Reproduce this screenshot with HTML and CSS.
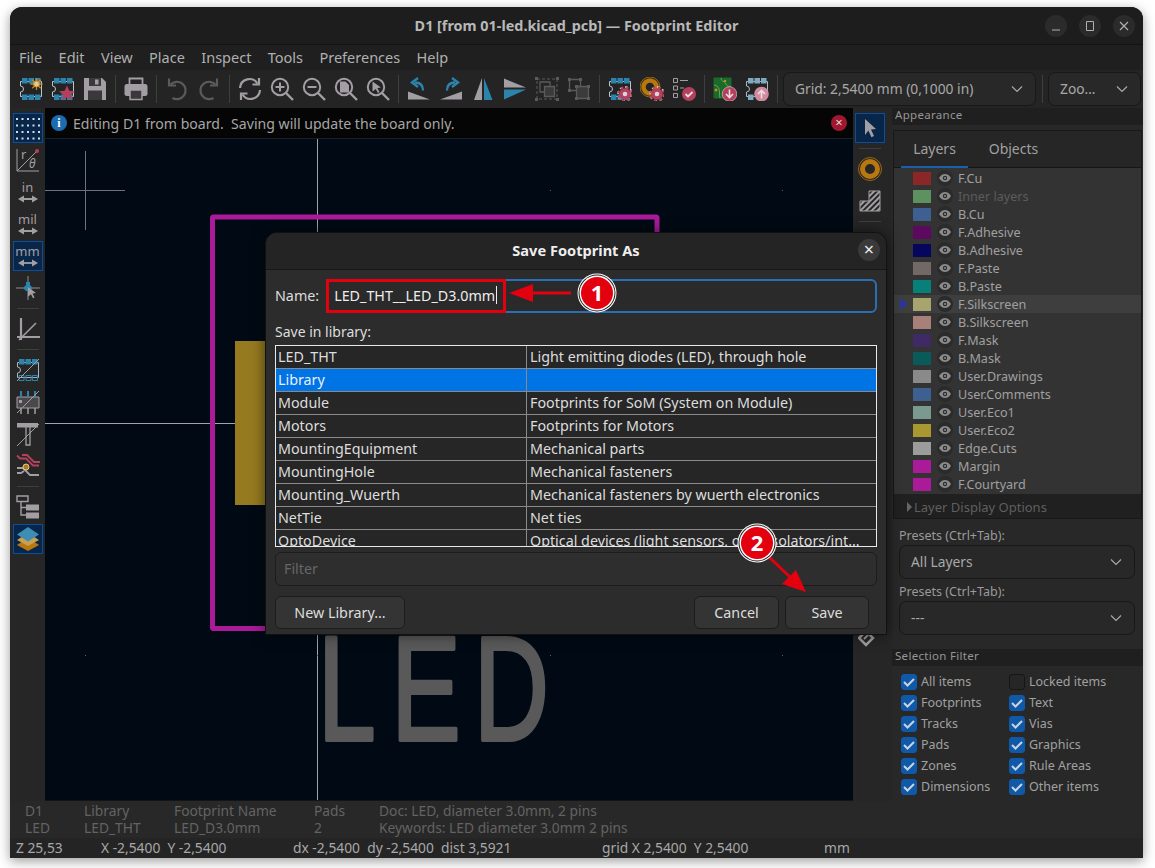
FILE: index.html
```html
<!DOCTYPE html>
<html>
<head>
  <title>Footprint Editor</title>
  <link rel="stylesheet" href="styles.css">
</head>
<body>
  <!-- icon sheet -->
  <svg class="sheet" xmlns="http://www.w3.org/2000/svg">
    <defs>
      <symbol id="fp" viewBox="0 0 24 24">
        <path d="M1.500 4.500h21v15h-21v-4.500a3 3 0 0 0 0-6z" fill="none" stroke="#b9c6cc"/>
        <path d="M3 1h5.500v5.500H3zM9.500 1H15v5.500H9.500zM16 1h5.500v5.500H16zM3 17.500h5.500V23H3zM9.500 17.500H15V23H9.500zM16 17.500h5.500V23H16z" fill="#2c83ab"/>
      </symbol>
      <symbol id="gear" viewBox="0 0 24 24">
        <circle cx="17" cy="17" r="7" fill="none" stroke="#d8d0d4" stroke-width="1.800" stroke-dasharray="2.600 2.900"/>
        <circle cx="17" cy="17" r="5.800" fill="#b5405e"/>
        <circle cx="17" cy="17" r="6.800" fill="none" stroke="#b5405e" stroke-width="1.800" stroke-dasharray="2.600 2.900"/>
        <circle cx="17" cy="17" r="2.300" fill="#dcd4d8"/>
      </symbol>
      <symbol id="fp-new" viewBox="0 0 24 24">
        <use href="#fp"/>
        <path d="M17.500 1v12M11.500 7h12M13.300 2.800l8.400 8.400M21.700 2.800l-8.400 8.400" stroke="#c98a1e" stroke-width="1.300"/>
        <circle cx="17.500" cy="7" r="3" fill="#e2c89a" stroke="#c98a1e"/>
      </symbol>
      <symbol id="fp-star" viewBox="0 0 24 24">
        <use href="#fp"/>
        <path d="M16 8.500l2.300 5.200 5.700.5-4.300 3.700 1.300 5.600-5-3-5 3 1.300-5.600L8 14.200l5.700-.5z" fill="#b5405e"/>
      </symbol>
      <symbol id="save" viewBox="0 0 24 24">
        <path d="M1 1h18l4 4v18H1z" fill="#a39ea3"/>
        <path d="M6 1h12v8H6z" fill="#3a383a"/>
        <path d="M12 2.500h3.500v5H12z" fill="#a39ea3"/>
        <path d="M5 13.500h14V23H5z" fill="#3a383a"/>
      </symbol>
      <symbol id="print" viewBox="0 0 24 24">
        <path d="M5.500 7V1.500h13V7" fill="none" stroke="#a39ea3" stroke-width="1.800"/>
        <rect x="0.500" y="7" width="23" height="12" rx="2.500" fill="#a39ea3"/>
        <path d="M6 13h12v9.500H6z" fill="#3a383a" stroke="#a39ea3" stroke-width="1.500"/>
      </symbol>
      <symbol id="undo" viewBox="0 0 24 24">
        <path d="M5.500 7.500a8.700 8.700 0 1 1 2 13.500" fill="none" stroke="#5c5a5c" stroke-width="2.200"/>
        <path d="M4 1.500v7h7" fill="none" stroke="#5c5a5c" stroke-width="2.200"/>
      </symbol>
      <symbol id="redo" viewBox="0 0 24 24">
        <path d="M18.500 7.500a8.700 8.700 0 1 0-2 13.500" fill="none" stroke="#5c5a5c" stroke-width="2.200"/>
        <path d="M20 1.500v7h-7" fill="none" stroke="#5c5a5c" stroke-width="2.200"/>
      </symbol>
      <symbol id="refresh" viewBox="0 0 24 24">
        <g fill="none" stroke="#a39ea3" stroke-width="2.200">
          <path d="M2 11a9.500 9.500 0 0 1 17.500-4.500"/>
          <path d="M21 1v6.500h-6.500"/>
          <path d="M22 13a9.500 9.500 0 0 1-17.500 4.500"/>
          <path d="M3 23v-6.500h6.500"/>
        </g>
      </symbol>
      <symbol id="mag" viewBox="0 0 24 24">
        <circle cx="10" cy="10" r="8.200" fill="none" stroke="#a39ea3" stroke-width="2"/>
        <path d="M16 16l7 7" stroke="#a39ea3" stroke-width="2.400"/>
      </symbol>
      <symbol id="zoom-in" viewBox="0 0 24 24">
        <use href="#mag"/><path d="M5.500 10h9M10 5.500v9" stroke="#a39ea3" stroke-width="2"/>
      </symbol>
      <symbol id="zoom-out" viewBox="0 0 24 24">
        <use href="#mag"/><path d="M5.500 10h9" stroke="#a39ea3" stroke-width="2"/>
      </symbol>
      <symbol id="zoom-fit" viewBox="0 0 24 24">
        <use href="#mag"/><path d="M6 4.500h5.500L15 8v7.500H6z" fill="#a39ea3"/>
      </symbol>
      <symbol id="zoom-sel" viewBox="0 0 24 24">
        <use href="#mag"/><path d="M6.500 4.500l8.500 6-3.700.6 2.200 4-1.600.8-2.100-4-3.300 2.600z" fill="#a39ea3"/>
      </symbol>
      <symbol id="rot-ccw" viewBox="0 0 24 24">
        <path d="M1 14.500L23 22.500H1z" fill="#a39ea3"/>
        <path d="M16 13.500c0-5-3-8-8-8" fill="none" stroke="#2c83ab" stroke-width="2.400"/>
        <path d="M11 1L5 5.500l6 4.500" fill="none" stroke="#2c83ab" stroke-width="2.400"/>
      </symbol>
      <symbol id="rot-cw" viewBox="0 0 24 24">
        <path d="M23 14.500L1 22.500H23z" fill="#a39ea3"/>
        <path d="M8 13.500c0-5 3-8 8-8" fill="none" stroke="#2c83ab" stroke-width="2.400"/>
        <path d="M13 1l6 4.500L13 10" fill="none" stroke="#2c83ab" stroke-width="2.400"/>
      </symbol>
      <symbol id="mirror-h" viewBox="0 0 24 24">
        <path d="M11 1L3 23h8z" fill="#a39ea3"/><path d="M13 1l8.500 22H13z" fill="#2c83ab"/>
      </symbol>
      <symbol id="mirror-v" viewBox="0 0 24 24">
        <path d="M1 1.500L23 10.500H1z" fill="#a39ea3"/><path d="M1 12.500H23L1 22.500z" fill="#2c83ab"/>
      </symbol>
      <symbol id="group" viewBox="0 0 24 24">
        <path d="M2 2h20v20H2z" fill="none" stroke="#5c5a5c" stroke-dasharray="3 2"/>
        <path d="M0 0h3v3H0zM21 0h3v3h-3zM0 21h3v3H0zM21 21h3v3h-3z" fill="#5c5a5c"/>
        <path d="M5 5h10v10H5z" fill="none" stroke="#5c5a5c" stroke-width="1.300"/>
        <path d="M9.500 9.500h10v10h-10z" fill="#3c3b3c" stroke="#5c5a5c" stroke-width="1.300"/>
      </symbol>
      <symbol id="ungroup" viewBox="0 0 24 24">
        <path d="M2.500 2.500h11v11h-11z" fill="none" stroke="#5c5a5c" stroke-width="1.300"/>
        <path d="M9.500 9.500h12v12h-12z" fill="#3c3b3c" stroke="#5c5a5c" stroke-width="1.300"/>
        <path d="M1 1h3v3H1zM12 1h3v3h-3zM1 12h3v3H1zM8 8h3v3H8zM20 8h3v3h-3zM8 20h3v3H8zM20 20h3v3h-3z" fill="#5c5a5c"/>
      </symbol>
      <symbol id="fp-gear" viewBox="0 0 24 24">
        <use href="#fp"/><use href="#gear"/>
      </symbol>
      <symbol id="pad-gear" viewBox="0 0 24 24">
        <circle cx="10" cy="10" r="6.500" fill="none" stroke="#b9780f" stroke-width="4.500"/>
        <circle cx="10" cy="10" r="10" fill="none" stroke="#b9780f" stroke-width=".8"/>
        <use href="#gear"/>
      </symbol>
      <symbol id="checks" viewBox="0 0 24 24">
        <path d="M1.500 1.500h4v4h-4zM1.500 9h4v4h-4zM1.500 16.500h4v4h-4z" fill="none" stroke="#a39ea3"/>
        <path d="M8 3.500h8M8 11h4" stroke="#a39ea3" stroke-width="1.200"/>
        <circle cx="17" cy="17" r="7" fill="#b5405e"/>
        <path d="M13.500 17l2.500 2.500 4.500-4.500" fill="none" stroke="#e8dfe2" stroke-width="1.800"/>
      </symbol>
      <symbol id="from-board" viewBox="0 0 24 24">
        <rect x="0.500" y="0.500" width="18" height="21" rx="1" fill="#1c6a28"/>
        <path d="M8 1c0 4 4 3 5 6s4 2 5 3M1 8c3 0 4 2 5 4s0 6 1 9" fill="none" stroke="#62a868"/>
        <circle cx="3" cy="13" r="1.500" fill="#c98a1e"/>
        <circle cx="12" cy="4" r="1.200" fill="#c98a1e"/>
        <circle cx="16.500" cy="17" r="7.300" fill="#b5405e" stroke="#d8d0d4" stroke-width=".6"/>
        <path d="M16.500 12.500v8M13 17l3.500 3.500L20 17" fill="none" stroke="#e8dfe2" stroke-width="1.600"/>
      </symbol>
      <symbol id="to-board" viewBox="0 0 24 24">
        <path d="M1.500 4.500h21v15h-21v-4.500a3 3 0 0 0 0-6z" fill="none" stroke="#a9b8c0"/>
        <path d="M3 1h5.500v5.500H3zM9.500 1H15v5.500H9.500zM16 1h5.500v5.500H16zM3 17.500h5.500V23H3z" fill="#7fa9bf"/>
        <circle cx="16.500" cy="17" r="7.300" fill="#d28a9e"/>
        <path d="M16.500 21.500v-8M13 17l3.500-3.500L20 17" fill="none" stroke="#e8dfe2" stroke-width="1.600"/>
      </symbol>
      <symbol id="polar" viewBox="0 0 24 24">
        <path d="M1 1v22h22" fill="none" stroke="#a39ea3"/>
        <path d="M1 23L21 3" stroke="#a39ea3"/>
        <circle cx="21" cy="3" r="2" fill="#b5405e"/>
        <text x="5" y="11" class="ico-text" font-size="13">r</text>
        <text x="13" y="20" class="ico-text" font-size="12" font-style="italic">&#952;</text>
      </symbol>
      <symbol id="unit-arrow" viewBox="0 0 24 24">
        <path d="M5 19h14" stroke="#a39ea3" stroke-width="1.800"/>
        <path d="M2 19l6-3.500v7zM22 19l-6-3.500v7z" fill="#a39ea3"/>
      </symbol>
      <symbol id="snap" viewBox="0 0 24 24">
        <path d="M12 0v24M0 12h24" stroke="#8f8a8f"/>
        <path d="M10 6h4v3l3 3-3 3h-4l-3-3 3-3z" fill="#2c83ab"/>
        <path d="M12 11l8 6-3.500.5 2 4-1.500.8-2-4-3 2.500z" fill="#a39ea3"/>
      </symbol>
      <symbol id="axes" viewBox="0 0 24 24">
        <path d="M5 1v22M1 20h23" stroke="#a39ea3" stroke-width="2.200"/>
        <path d="M3 23L20 6" stroke="#a39ea3" stroke-width="1.600"/>
      </symbol>
      <symbol id="fp-slash" viewBox="0 0 24 24">
        <path d="M1.500 4.500h21v15h-21v-4.500a3 3 0 0 0 0-6z" fill="none" stroke="#a9b8c0"/>
        <path d="M3 1h5.500v5.500H3zM9.500 1H15v5.500H9.500zM16 1h5.500v5.500H16z" fill="#2c83ab"/>
        <path d="M3 17.500h5v5H3zM10 17.500h5v5h-5zM16.500 17.500h5v5h-5z" fill="none" stroke="#2c83ab"/>
        <path d="M1 23L23 1" stroke="#a39ea3"/>
      </symbol>
      <symbol id="ic-slash" viewBox="0 0 24 24">
        <path d="M1 7h22v11H1z" fill="#4a484a" stroke="#a39ea3"/>
        <path d="M5 1v6M12 1v6M19 1v6" stroke="#2c83ab" stroke-width="2"/>
        <path d="M5 18v6M12 18v6M19 18v6" stroke="#a39ea3" stroke-width="1.500"/>
        <path d="M3 10h3v3H3z" fill="#a39ea3"/>
        <path d="M1 23L23 1" stroke="#a39ea3"/>
      </symbol>
      <symbol id="text-slash" viewBox="0 0 24 24">
        <path d="M10 5v18h4V5" fill="none" stroke="#a39ea3" stroke-width="1.300"/>
        <path d="M1 1h21v4.500H1z" fill="#a39ea3"/>
        <path d="M1 24L23 2" stroke="#a39ea3"/>
      </symbol>
      <symbol id="tracks" viewBox="0 0 24 24">
        <path d="M6 1h5l7 7h6M1 1.500l3 3h6l7 7h6" fill="none" stroke="#b5405e" stroke-width="1.800"/>
        <path d="M1 14h6l7 7h9M1 19h4l3-2" fill="none" stroke="#a39ea3" stroke-width="1.800"/>
        <circle cx="10" cy="13" r="3" fill="#b9780f" stroke="#d8c8a0"/>
      </symbol>
      <symbol id="tree" viewBox="0 0 24 24">
        <path d="M1 1h11v5.500H1z" fill="none" stroke="#a39ea3" stroke-width="1.400"/>
        <path d="M5 6.500V20h5M5 12.500h5" fill="none" stroke="#a39ea3" stroke-width="1.400"/>
        <path d="M10 9.500h13v6H10zM10 17.500h13v6H10z" fill="#a39ea3"/>
      </symbol>
      <symbol id="layers" viewBox="0 0 24 24">
        <path d="M12 11l11 7-11 6-11-6z" fill="#b9780f"/>
        <path d="M12 6l11 7-11 6-11-6z" fill="#c9a050"/>
        <path d="M12 0l11 7.500-11 7-11-7z" fill="#3d8db5"/>
      </symbol>
      <symbol id="arrow" viewBox="0 0 24 24">
        <path d="M7 3l11 10-5 .5 3 6.500-2.600 1.200-3-6.700L7 19z" fill="#a39ea3"/>
      </symbol>
      <symbol id="ring" viewBox="0 0 24 24">
        <circle cx="12" cy="12" r="7.500" fill="none" stroke="#b9780f" stroke-width="5"/>
        <circle cx="12" cy="12" r="11.500" fill="none" stroke="#b9780f" stroke-width=".8"/>
      </symbol>
      <pattern id="stripes" width="4" height="4" patternUnits="userSpaceOnUse" patternTransform="rotate(45)">
        <rect width="2" height="4" fill="#a39ea3"/>
      </pattern>
      <symbol id="hatch" viewBox="0 0 24 24">
        <path d="M2 22V12h9V2h11v20z" fill="url(#stripes)" stroke="#a39ea3"/>
      </symbol>
      <symbol id="tag" viewBox="0 0 24 24">
        <path d="M1 10l7-7 7 7-7 7z" fill="none" stroke="#a39ea3" stroke-width="2.500"/>
        <path d="M6 11l4-4" stroke="#a39ea3" stroke-width="2"/>
      </symbol>
      <symbol id="eye" viewBox="0 0 12 8">
        <path d="M0 4c2-3.200 4-4 6-4s4 .8 6 4c-2 3.200-4 4-6 4S2 7.200 0 4z" fill="#8b8b8b"/>
        <circle cx="6" cy="4" r="2.200" fill="#2b2b2b"/>
        <circle cx="6" cy="4" r="1.100" fill="#8b8b8b"/>
      </symbol>
      <symbol id="chev" viewBox="0 0 12 8">
        <path d="M1 1.500l5 5 5-5" fill="none" stroke="#a8a8a8" stroke-width="1.200"/>
      </symbol>
      <symbol id="dots" viewBox="0 0 24 24">
        <g fill="#d6dce2">
          <rect x="0" y="2" width="2" height="2"/><rect x="5.500" y="2" width="2" height="2"/><rect x="11" y="2" width="2" height="2"/><rect x="16.500" y="2" width="2" height="2"/><rect x="22" y="2" width="2" height="2"/>
          <rect x="0" y="8.500" width="2" height="2"/><rect x="5.500" y="8.500" width="2" height="2"/><rect x="11" y="8.500" width="2" height="2"/><rect x="16.500" y="8.500" width="2" height="2"/><rect x="22" y="8.500" width="2" height="2"/>
          <rect x="0" y="15" width="2" height="2"/><rect x="5.500" y="15" width="2" height="2"/><rect x="11" y="15" width="2" height="2"/><rect x="16.500" y="15" width="2" height="2"/><rect x="22" y="15" width="2" height="2"/>
          <rect x="0" y="21.500" width="2" height="2"/><rect x="5.500" y="21.500" width="2" height="2"/><rect x="11" y="21.500" width="2" height="2"/><rect x="16.500" y="21.500" width="2" height="2"/><rect x="22" y="21.500" width="2" height="2"/>
        </g>
      </symbol>
    </defs>
  </svg>

  <div class="window">
    <header class="titlebar">
      <span class="title">D1 [from 01-led.kicad_pcb] — Footprint Editor</span>
      <div class="win-btns">
        <span class="win-btn"><svg width="10" height="10"><path d="M1 9h8" stroke="#b0b0b0" stroke-width="1.200"/></svg></span>
        <span class="win-btn"><svg width="10" height="10"><path d="M1.500 .5h7v9h-7z" fill="none" stroke="#b0b0b0"/></svg></span>
        <span class="win-btn"><svg width="10" height="10"><path d="M1 1l8 8M9 1l-8 8" stroke="#b0b0b0" stroke-width="1.200"/></svg></span>
      </div>
    </header>

    <nav class="menubar">
      <span>File</span><span>Edit</span><span>View</span><span>Place</span><span>Inspect</span><span>Tools</span><span>Preferences</span><span>Help</span>
    </nav>

    <div class="toolbar">
      <span class="tool"><svg class="ico"><use href="#fp-new"/></svg></span>
      <span class="tool"><svg class="ico"><use href="#fp-star"/></svg></span>
      <span class="tool"><svg class="ico"><use href="#save"/></svg></span>
      <i class="vsep"></i>
      <span class="tool"><svg class="ico"><use href="#print"/></svg></span>
      <i class="vsep"></i>
      <span class="tool"><svg class="ico"><use href="#undo"/></svg></span>
      <span class="tool"><svg class="ico"><use href="#redo"/></svg></span>
      <i class="vsep"></i>
      <span class="tool"><svg class="ico"><use href="#refresh"/></svg></span>
      <span class="tool"><svg class="ico"><use href="#zoom-in"/></svg></span>
      <span class="tool"><svg class="ico"><use href="#zoom-out"/></svg></span>
      <span class="tool"><svg class="ico"><use href="#zoom-fit"/></svg></span>
      <span class="tool"><svg class="ico"><use href="#zoom-sel"/></svg></span>
      <i class="vsep"></i>
      <span class="tool"><svg class="ico"><use href="#rot-ccw"/></svg></span>
      <span class="tool"><svg class="ico"><use href="#rot-cw"/></svg></span>
      <span class="tool"><svg class="ico"><use href="#mirror-h"/></svg></span>
      <span class="tool"><svg class="ico"><use href="#mirror-v"/></svg></span>
      <span class="tool"><svg class="ico"><use href="#group"/></svg></span>
      <span class="tool"><svg class="ico"><use href="#ungroup"/></svg></span>
      <i class="vsep"></i>
      <span class="tool"><svg class="ico"><use href="#fp-gear"/></svg></span>
      <span class="tool"><svg class="ico"><use href="#pad-gear"/></svg></span>
      <span class="tool"><svg class="ico"><use href="#checks"/></svg></span>
      <i class="vsep"></i>
      <span class="tool"><svg class="ico"><use href="#from-board"/></svg></span>
      <span class="tool"><svg class="ico"><use href="#to-board"/></svg></span>
      <i class="vsep"></i>
      <div class="combo combo-grid"><span>Grid: 2,5400 mm (0,1000 in)</span><svg class="chev"><use href="#chev"/></svg></div>
      <i class="vsep vsep-combo"></i>
      <div class="combo combo-zoom"><span>Zoo…</span><svg class="chev"><use href="#chev"/></svg></div>
    </div>

    <div class="main">
      <div class="center">
        <div class="work">
          <aside class="sidetools">
            <span class="tool on"><svg class="ico"><use href="#dots"/></svg></span>
            <span class="tool"><svg class="ico"><use href="#polar"/></svg></span>
            <span class="tool unit"><b>in</b><svg class="ico"><use href="#unit-arrow"/></svg></span>
            <span class="tool unit"><b>mil</b><svg class="ico"><use href="#unit-arrow"/></svg></span>
            <span class="tool unit on"><b>mm</b><svg class="ico"><use href="#unit-arrow"/></svg></span>
            <span class="tool"><svg class="ico"><use href="#snap"/></svg></span>
            <i class="hsep"></i>
            <span class="tool"><svg class="ico"><use href="#axes"/></svg></span>
            <i class="hsep"></i>
            <span class="tool"><svg class="ico"><use href="#fp-slash"/></svg></span>
            <span class="tool"><svg class="ico"><use href="#ic-slash"/></svg></span>
            <span class="tool"><svg class="ico"><use href="#text-slash"/></svg></span>
            <span class="tool"><svg class="ico"><use href="#tracks"/></svg></span>
            <i class="hsep"></i>
            <span class="tool"><svg class="ico"><use href="#tree"/></svg></span>
            <span class="tool on"><svg class="ico"><use href="#layers"/></svg></span>
          </aside>

          <div class="canvas">
            <div class="infobar">
              <span class="info-dot">i</span>
              <span class="info-text">Editing D1 from board.&nbsp; Saving will update the board only.</span>
              <span class="info-close">×</span>
            </div>
            <svg class="view" viewBox="0 0 808 661">
              <path d="M40.500 12v79M0 51.500h80" stroke="#6f7378"/>
              <path d="M0 284.500h190M272.500 0v662" stroke="#a0a4a8"/>
              <rect x="167.500" y="78" width="444.500" height="411.500" rx="1" fill="none" stroke="#aa1a99" stroke-width="5"/>
              <rect x="190" y="202" width="200" height="164" fill="#957a20"/>
              <path d="M40 516.500h1M272 516.500h1M505 516.500h1M737 516.500h1M505 51.500h1M737 51.500h1M737 284.500h1" stroke="#596068"/>
              <text class="led" transform="translate(0 600.500) scale(.7 1)" x="390 495 613">LED</text>
            </svg>
          </div>

          <aside class="sidetools sidetools-right">
            <span class="tool on"><svg class="ico"><use href="#arrow"/></svg></span>
            <i class="hsep"></i>
            <span class="tool"><svg class="ico"><use href="#ring"/></svg></span>
            <span class="tool"><svg class="ico"><use href="#hatch"/></svg></span>
            <i class="hsep"></i>
            <span class="tool tool-low"><svg class="ico"><use href="#tag"/></svg></span>
          </aside>
        </div>

        <div class="msgpanel">
          <div><p>D1</p><p>LED</p></div>
          <div><p>Library</p><p>LED_THT</p></div>
          <div><p>Footprint Name</p><p>LED_D3.0mm</p></div>
          <div><p>Pads</p><p>2</p></div>
          <div><p>Doc: LED, diameter 3.0mm, 2 pins</p><p>Keywords: LED diameter 3.0mm 2 pins</p></div>
        </div>
      </div>

      <aside class="panel">
        <h4 class="panel-head">Appearance</h4>
        <div class="layerbox">
          <div class="tabs">
            <span class="tab tab-on">Layers</span>
            <span class="tab">Objects</span>
          </div>
          <ul class="layers">
            <li><i class="swatch c-fcu"></i><span class="eye"><svg><use href="#eye"/></svg></span>F.Cu</li>
            <li class="off"><i class="swatch c-inner"></i><span class="eye"><svg><use href="#eye"/></svg></span>Inner layers</li>
            <li><i class="swatch c-bcu"></i><span class="eye"><svg><use href="#eye"/></svg></span>B.Cu</li>
            <li><i class="swatch c-fadh"></i><span class="eye"><svg><use href="#eye"/></svg></span>F.Adhesive</li>
            <li><i class="swatch c-badh"></i><span class="eye"><svg><use href="#eye"/></svg></span>B.Adhesive</li>
            <li><i class="swatch c-fpaste"></i><span class="eye"><svg><use href="#eye"/></svg></span>F.Paste</li>
            <li><i class="swatch c-bpaste"></i><span class="eye"><svg><use href="#eye"/></svg></span>B.Paste</li>
            <li class="current"><i class="swatch c-fsilk"></i><span class="eye"><svg><use href="#eye"/></svg></span>F.Silkscreen</li>
            <li><i class="swatch c-bsilk"></i><span class="eye"><svg><use href="#eye"/></svg></span>B.Silkscreen</li>
            <li><i class="swatch c-fmask"></i><span class="eye"><svg><use href="#eye"/></svg></span>F.Mask</li>
            <li><i class="swatch c-bmask"></i><span class="eye"><svg><use href="#eye"/></svg></span>B.Mask</li>
            <li><i class="swatch c-draw"></i><span class="eye"><svg><use href="#eye"/></svg></span>User.Drawings</li>
            <li><i class="swatch c-comm"></i><span class="eye"><svg><use href="#eye"/></svg></span>User.Comments</li>
            <li><i class="swatch c-eco1"></i><span class="eye"><svg><use href="#eye"/></svg></span>User.Eco1</li>
            <li><i class="swatch c-eco2"></i><span class="eye"><svg><use href="#eye"/></svg></span>User.Eco2</li>
            <li><i class="swatch c-edge"></i><span class="eye"><svg><use href="#eye"/></svg></span>Edge.Cuts</li>
            <li><i class="swatch c-margin"></i><span class="eye"><svg><use href="#eye"/></svg></span>Margin</li>
            <li><i class="swatch c-margin"></i><span class="eye"><svg><use href="#eye"/></svg></span>F.Courtyard</li>
          </ul>
          <div class="display-opts"><i class="tri"></i>Layer Display Options</div>
        </div>

        <div class="presets">
          <label>Presets (Ctrl+Tab):</label>
          <div class="combo"><span>All Layers</span><svg class="chev"><use href="#chev"/></svg></div>
          <label>Presets (Ctrl+Tab):</label>
          <div class="combo"><span>---</span><svg class="chev"><use href="#chev"/></svg></div>
        </div>

        <h4 class="panel-head">Selection Filter</h4>
        <div class="filters">
          <label class="check"><i class="box on"></i>All items</label>
          <label class="check"><i class="box"></i>Locked items</label>
          <label class="check"><i class="box on"></i>Footprints</label>
          <label class="check"><i class="box on"></i>Text</label>
          <label class="check"><i class="box on"></i>Tracks</label>
          <label class="check"><i class="box on"></i>Vias</label>
          <label class="check"><i class="box on"></i>Pads</label>
          <label class="check"><i class="box on"></i>Graphics</label>
          <label class="check"><i class="box on"></i>Zones</label>
          <label class="check"><i class="box on"></i>Rule Areas</label>
          <label class="check"><i class="box on"></i>Dimensions</label>
          <label class="check"><i class="box on"></i>Other items</label>
        </div>
      </aside>
    </div>

    <footer class="statusbar">
      <span>Z 25,53</span>
      <span>X -2,5400&nbsp; Y -2,5400</span>
      <span>dx -2,5400&nbsp; dy -2,5400&nbsp; dist 3,5921</span>
      <span>grid X 2,5400&nbsp; Y 2,5400</span>
      <span>mm</span>
    </footer>
  </div>

  <!-- modal -->
  <div class="dialog">
    <div class="dlg-title">
      <span>Save Footprint As</span>
      <span class="dlg-close">×</span>
    </div>
    <div class="dlg-body">
      <div class="name-row">
        <span>Name:</span>
        <div class="name-input">LED_THT__LED_D3.0mm<i class="caret"></i></div>
      </div>
      <div class="lib-label">Save in library:</div>
      <div class="libtable">
        <div class="librow"><span>LED_THT</span><span>Light emitting diodes (LED), through hole</span></div>
        <div class="librow sel"><span>Library</span><span></span></div>
        <div class="librow"><span>Module</span><span>Footprints for SoM (System on Module)</span></div>
        <div class="librow"><span>Motors</span><span>Footprints for Motors</span></div>
        <div class="librow"><span>MountingEquipment</span><span>Mechanical parts</span></div>
        <div class="librow"><span>MountingHole</span><span>Mechanical fasteners</span></div>
        <div class="librow"><span>Mounting_Wuerth</span><span>Mechanical fasteners by wuerth electronics</span></div>
        <div class="librow"><span>NetTie</span><span>Net ties</span></div>
        <div class="librow"><span>OptoDevice</span><span>Optical devices (light sensors, opto-isolators/int...</span></div>
      </div>
      <div class="filter-input">Filter</div>
      <div class="dlg-btns">
        <button>New Library...</button>
        <button class="push-right btn-cancel">Cancel</button>
        <button class="btn-save">Save</button>
      </div>
    </div>
  </div>

  <!-- screenshot annotations -->
  <div class="redbox"></div>
  <svg class="marks" viewBox="0 0 1155 868">
    <path d="M571 293H530" stroke="#e3000f" stroke-width="3"/>
    <path d="M509 293l24-9v18z" fill="#e3000f"/>
    <path d="M769 557l22 21" stroke="#e3000f" stroke-width="3"/>
    <path d="M806 592l-24-8 14-14z" fill="#e3000f"/>
    <g class="badge" transform="translate(597 293)">
      <circle r="19.500" fill="#fff"/><circle r="18.500" fill="#222"/><circle r="17.500" fill="#fff"/><circle r="16" fill="#e3000f"/>
      <text y="8" text-anchor="middle">1</text>
    </g>
    <g class="badge" transform="translate(757 543)">
      <circle r="19.500" fill="#fff"/><circle r="18.500" fill="#222"/><circle r="17.500" fill="#fff"/><circle r="16" fill="#e3000f"/>
      <text y="8" text-anchor="middle">2</text>
    </g>
  </svg>
</body>
</html>
```
FILE: styles.css
```css
* {
  box-sizing: border-box;
}

html, body {
  margin: 0;
  height: 100%;
}

body {
  background-color: #fff;
  padding: 7px 12px 0 10px;
  font-family: "Noto Sans", sans-serif;
  font-size: 13.8px;
  color: #a8a8a8;
  overflow: hidden;
}

.sheet {
  position: absolute;
  width: 0;
  height: 0;
}

.window {
  height: 851px;
  display: flex;
  flex-direction: column;
  background-color: #282828;
  border-radius: 12px 12px 0 0;
  overflow: hidden;
  box-shadow: 0 3px 12px rgba(0, 0, 0, 0.4);
}

/* title + menu */
.titlebar {
  height: 38px;
  flex: none;
  display: flex;
  align-items: center;
  justify-content: center;
  position: relative;
  background-color: #1d1d1d;
  border-bottom: 1px solid #141414;
}

.title {
  font-weight: 700;
  font-size: 14.4px;
  color: #b8b8b8;
}

.win-btns {
  position: absolute;
  right: 8px;
  top: 8px;
  display: flex;
  gap: 12px;
}

.win-btn {
  width: 22px;
  height: 22px;
  border-radius: 50%;
  background-color: #2b2b2b;
  display: flex;
  align-items: center;
  justify-content: center;
}

.menubar {
  height: 25px;
  flex: none;
  display: flex;
  align-items: center;
  gap: 16.4px;
  padding: 0 0 2px 9px;
  background-color: #1f1f1f;
  color: #b0b0b0;
  font-size: 14.5px;
}

/* toolbars */
.toolbar {
  height: 38px;
  flex: none;
  display: flex;
  align-items: center;
  padding-left: 5px;
  background-color: #242424;
}

.tool {
  width: 32px;
  height: 30px;
  flex: none;
  display: flex;
  align-items: center;
  justify-content: center;
  border: 1px solid transparent;
}

.ico {
  width: 24px;
  height: 24px;
  display: block;
}

.ico-text {
  fill: #a39ea3;
  font-family: "Noto Sans", sans-serif;
}

.vsep {
  width: 9px;
  height: 28px;
  flex: none;
  background: linear-gradient(#3e3e3e, #3e3e3e) center / 1px 100% no-repeat;
}

.vsep-combo {
  width: 12px;
}

.combo {
  height: 34px;
  display: flex;
  align-items: center;
  justify-content: space-between;
  padding: 0 12px 1px 11px;
  background-color: #282828;
  border: 1px solid #181818;
  border-radius: 7px;
  color: #a8a8a8;
}

.combo-grid {
  width: 253px;
  margin-left: 1px;
}

.combo-zoom {
  width: 93px;
}

.chev {
  width: 12px;
  height: 8px;
  flex: none;
}

.main {
  flex: 1;
  min-height: 0;
  display: flex;
}

.center {
  flex: 1;
  min-width: 0;
  display: flex;
  flex-direction: column;
}

.work {
  flex: 1;
  min-height: 0;
  display: flex;
}

.sidetools {
  width: 35px;
  flex: none;
  display: flex;
  flex-direction: column;
  align-items: center;
  gap: 2px;
  padding-top: 5px;
  background-color: #262626;
}

.sidetools .tool {
  width: 30px;
}

.sidetools-right {
  width: 39px;
  padding-right: 6px;
}

.tool-low {
  margin-top: 398px;
}

.tool.on {
  background-color: #08264a;
  border-color: #0b4f9c;
}

.hsep {
  width: 22px;
  height: 7px;
  flex: none;
  background: linear-gradient(#3e3e3e, #3e3e3e) center / 100% 1px no-repeat;
}

.unit {
  position: relative;
}

.unit b {
  position: absolute;
  left: 0;
  right: 0;
  top: 2px;
  text-align: center;
  font-weight: 400;
  font-size: 13px;
  line-height: 15px;
  color: #a39ea3;
}

/* canvas */
.canvas {
  flex: 1;
  min-width: 0;
  display: flex;
  flex-direction: column;
  background-color: #010a14;
  border-bottom: 1px solid #141414;
}

.infobar {
  height: 31px;
  flex: none;
  display: flex;
  align-items: center;
  padding: 0 6px;
  background-color: #050505;
  border-bottom: 1px solid #16202a;
}

.info-dot {
  width: 16px;
  height: 16px;
  border-radius: 50%;
  background-color: #1c6cb0;
  color: #fff;
  font: 700 12px/16px "Liberation Serif", serif;
  text-align: center;
}

.info-text {
  margin-left: 6px;
  flex: 1;
  font-size: 14.1px;
  color: #a5a5a5;
}

.info-close {
  width: 16px;
  height: 16px;
  border-radius: 50%;
  background-color: #a01830;
  color: #e8d0d4;
  font-size: 13px;
  line-height: 15px;
  text-align: center;
}

.view {
  display: block;
  flex: 1;
  width: 100%;
  min-height: 0;
}

.led {
  font-family: "Liberation Sans", sans-serif;
  font-size: 148px;
  fill: #595959;
  stroke: #595959;
  stroke-width: 4px;
  stroke-linejoin: round;
}

/* message panel and status */
.msgpanel {
  height: 37px;
  flex: none;
  display: grid;
  grid-template-columns: 59px 90px 140px 65px 1fr;
  padding: 1px 0 0 15px;
  color: #636363;
}

.msgpanel p {
  margin: 0;
  height: 17px;
  line-height: 17px;
  white-space: nowrap;
}

.statusbar {
  height: 20px;
  flex: none;
  display: grid;
  grid-template-columns: 85px 192px 309px 222px 1fr;
  align-items: center;
  padding: 0 0 2px 6px;
  background-color: #242424;
  color: #a8a8a8;
  white-space: nowrap;
}

/* right panel */
.panel {
  width: 251px;
  flex: none;
  background-color: #282828;
}

.panel-head {
  margin: 0;
  height: 17px;
  line-height: 14px;
  padding-left: 3px;
  background-color: #1f1f1f;
  font-weight: 400;
  font-size: 11.5px;
  letter-spacing: 0.3px;
  color: #969696;
}

.layerbox {
  margin: 5px 1px 0;
  height: 389px;
  display: flex;
  flex-direction: column;
  border: 1px solid #181818;
  background-color: #222;
}

.tabs {
  height: 37px;
  flex: none;
  display: flex;
  border-bottom: 1px solid #161616;
  background-color: #262626;
  font-size: 14px;
}

.tab {
  width: 67px;
  height: 37px;
  margin-left: 7px;
  line-height: 35px;
  text-align: center;
  color: #a0a0a0;
}

.tab + .tab {
  margin-left: 12px;
}

.tab-on {
  border-bottom: 2px solid #1a5fa8;
}

.layers {
  list-style: none;
  margin: 0;
  padding: 1px 0 0;
  height: 326px;
  background-color: #333;
  color: #a0a0a0;
}

.layers li {
  height: 18px;
  display: flex;
  align-items: center;
  position: relative;
  padding-left: 19px;
  font-size: 12.6px;
  white-space: nowrap;
}

.layers .off {
  color: #5c5c5c;
}

.layers .current {
  background-color: #3e3e3e;
}

.layers .current::before {
  content: "";
  position: absolute;
  left: 6px;
  top: 3px;
  border-left: 7px solid #2a35a8;
  border-top: 6px solid transparent;
  border-bottom: 6px solid transparent;
}

.swatch {
  width: 18px;
  height: 13px;
  flex: none;
}

.eye {
  width: 16px;
  height: 16px;
  flex: none;
  margin: 0 5px 0 6px;
  border-radius: 50%;
  background-color: #2b2b2b;
  display: flex;
  align-items: center;
  justify-content: center;
}

.eye svg {
  width: 12px;
  height: 8px;
}

.c-fcu { background-color: #8b2727; }
.c-inner { background-color: #5d9160; }
.c-bcu { background-color: #3d5f92; }
.c-fadh { background-color: #5c0a60; }
.c-badh { background-color: #06065e; }
.c-fpaste { background-color: #726866; }
.c-bpaste { background-color: #07807a; }
.c-fsilk { background-color: #a8a46e; }
.c-bsilk { background-color: #a8807a; }
.c-fmask { background-color: #3f2a66; }
.c-bmask { background-color: #0b5a5a; }
.c-draw { background-color: #8a8a8a; }
.c-comm { background-color: #3d6090; }
.c-eco1 { background-color: #7a9a90; }
.c-eco2 { background-color: #a8982f; }
.c-edge { background-color: #9c9c9c; }
.c-margin { background-color: #aa1a99; }

.display-opts {
  flex: 1;
  display: flex;
  align-items: center;
  padding: 2px 0 0 13px;
  background-color: #202020;
  color: #5f5f5f;
  font-size: 13px;
}

.tri {
  border-left: 5px solid #666;
  border-top: 5px solid transparent;
  border-bottom: 5px solid transparent;
  margin-right: 2px;
}

.presets {
  height: 130px;
  padding: 8px 8px 0 7px;
}

.presets label {
  display: block;
  height: 18px;
  line-height: 18px;
  font-size: 12.5px;
  color: #9a9a9a;
}

.presets .combo {
  height: 34px;
  margin-bottom: 4px;
}

.filters {
  display: grid;
  grid-template-columns: 108px 1fr;
  grid-auto-rows: 21px;
  padding: 5px 0 0 9px;
}

.check {
  display: flex;
  align-items: center;
  gap: 4px;
  font-size: 12.5px;
  color: #a0a0a0;
  white-space: nowrap;
}

.box {
  width: 16px;
  height: 16px;
  flex: none;
  border-radius: 3px;
  background-color: #262626;
  border: 1px solid #161616;
}

.box.on {
  background: #0f59a8 url("data:image/svg+xml,%3Csvg xmlns='http://www.w3.org/2000/svg' viewBox='0 0 16 16'%3E%3Cpath d='M3 8l3.500 3.500L13 5' fill='none' stroke='%23c8d4e0' stroke-width='2'/%3E%3C/svg%3E") center / 16px no-repeat;
  border-color: #0f59a8;
}

/* dialog */
.dialog {
  position: absolute;
  left: 265px;
  top: 232px;
  width: 622px;
  height: 403px;
  display: flex;
  flex-direction: column;
  background-color: #2c2c2c;
  border: 1px solid #111;
  border-radius: 12px 12px 0 0;
  box-shadow: 0 0 14px rgba(0, 0, 0, 0.55);
  font-size: 14.3px;
}

.dlg-title {
  height: 37px;
  flex: none;
  display: flex;
  align-items: center;
  justify-content: center;
  position: relative;
  padding-bottom: 2px;
  background-color: #242424;
  border-bottom: 1px solid #181818;
  border-radius: 12px 12px 0 0;
  font-weight: 700;
  font-size: 14.6px;
  color: #eee;
}

.dlg-close {
  position: absolute;
  right: 6px;
  top: 6px;
  width: 22px;
  height: 22px;
  border-radius: 50%;
  background-color: #3a3a3a;
  font-size: 18px;
  font-weight: 400;
  line-height: 21px;
  text-align: center;
}

.dlg-body {
  flex: 1;
  display: flex;
  flex-direction: column;
  padding: 9px 9px 0;
}

.name-row {
  height: 34px;
  display: flex;
  align-items: center;
  gap: 7px;
  color: #ddd;
}

.name-row > span {
  padding-bottom: 1px;
}

.name-input {
  flex: 1;
  height: 34px;
  display: flex;
  align-items: center;
  padding: 0 0 2px 6px;
  background-color: #2a2a2a;
  border: 2px solid #2a6fb5;
  border-radius: 6px;
  color: #eee;
}

.caret {
  width: 1px;
  height: 18px;
  margin-left: 1px;
  background-color: #eee;
}

.lib-label {
  height: 32px;
  line-height: 38px;
  font-size: 14px;
  color: #ddd;
}

.libtable {
  height: 202px;
  overflow: hidden;
  border: 1px solid #e8e8e8;
  background-color: #262626;
  color: #ddd;
}

.librow {
  height: 23px;
  display: grid;
  grid-template-columns: 250px 1fr;
  border-bottom: 1px solid #8a8a8a;
  line-height: 22px;
  white-space: nowrap;
}

.librow span {
  padding-left: 2px;
  overflow: hidden;
}

.librow span + span {
  padding-left: 3px;
  border-left: 1px solid #8a8a8a;
}

.librow.sel {
  background-color: #0073e5;
  color: #e8f0fa;
}

.filter-input {
  height: 34px;
  flex: none;
  margin-top: 5px;
  padding-left: 8px;
  line-height: 32px;
  background-color: #2e2e2e;
  border: 1px solid #1c1c1c;
  border-radius: 6px;
  color: #666;
}

.dlg-btns {
  display: flex;
  gap: 6px;
  margin-top: 10px;
  padding-right: 8px;
}

.dlg-btns button {
  height: 33px;
  width: 130px;
  padding: 0;
  background-color: #343434;
  border: 1px solid #1c1c1c;
  border-radius: 6px;
  font: inherit;
  color: #ddd;
}

.dlg-btns .btn-cancel {
  width: 85px;
}

.dlg-btns .btn-save {
  width: 84px;
}

.push-right {
  margin-left: auto;
}

/* annotations */
.redbox {
  position: absolute;
  left: 326px;
  top: 279px;
  width: 180px;
  height: 34px;
  border: 3px solid #e3000f;
}

.marks {
  position: absolute;
  left: 0;
  top: 0;
  width: 1155px;
  height: 868px;
  pointer-events: none;
}

.badge text {
  font-family: "Noto Sans", sans-serif;
  font-weight: 700;
  font-size: 22px;
  fill: #fff;
}
```
